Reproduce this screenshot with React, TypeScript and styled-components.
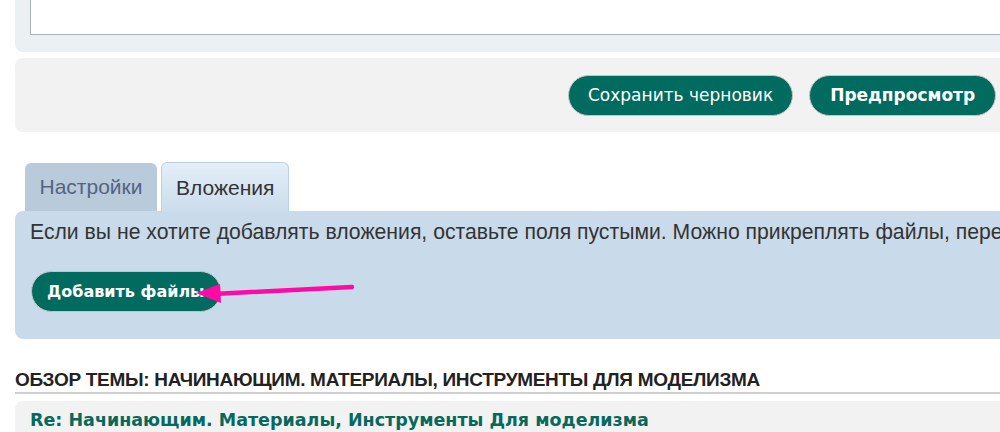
import React from "react";
import styled, { createGlobalStyle } from "styled-components";

const GlobalStyle = createGlobalStyle`
  html, body {
    margin: 0;
    padding: 0;
    background: #fff;
    overflow: hidden;
  }
  body {
    font-family: "Liberation Sans", Arial, sans-serif;
  }
`;

const Page = styled.div`
  width: 1120px;
  padding-left: 15px;
  margin-top: -14px;
  display: flex;
  flex-direction: column;
`;

const EditorPanel = styled.div`
  background: #ebf0f3;
  border-radius: 0 0 8px 8px;
  padding: 0 15px 17px 15px;
`;

const TextArea = styled.div`
  height: 48px;
  background: #fff;
  border: 1px solid #a9b4bd;
  border-top: none;
`;

const ActionBar = styled.div`
  margin-top: 6px;
  background: #f2f2f2;
  border-radius: 8px;
  height: 74px;
  display: flex;
  align-items: center;
  padding-left: 553px;
  gap: 16px;
`;

const PillButton = styled.button<{ $bold?: boolean; $size?: number; $pad?: number }>`
  height: 41px;
  padding: 0 ${(p) => p.$pad ?? 17}px;
  border-radius: 21px;
  border: 1px solid #c4c4c4;
  background: #026b5f;
  color: #fff;
  font-family: "DejaVu Sans", Verdana, sans-serif;
  font-size: ${(p) => p.$size ?? 17}px;
  font-weight: ${(p) => (p.$bold ? 700 : 400)};
  cursor: pointer;
  white-space: nowrap;
`;

const Tabs = styled.div`
  margin-top: 30px;
  display: flex;
  align-items: flex-end;
  gap: 4px;
  padding-left: 10px;
`;

const Tab = styled.div<{ $active?: boolean }>`
  height: ${(p) => (p.$active ? 50 : 48)}px;
  box-sizing: border-box;
  padding: 0 ${(p) => (p.$active ? 14 : 14.5)}px;
  display: flex;
  align-items: center;
  font-size: 21px;
  border-radius: 6px 6px 0 0;
  color: ${(p) => (p.$active ? "#333" : "#536482")};
  background: ${(p) =>
    p.$active ? "linear-gradient(#e4eef8, #cbdcec)" : "#b9cada"};
  border: ${(p) => (p.$active ? "1px solid #bcd0e3" : "none")};
  border-bottom: none;
  margin-bottom: ${(p) => (p.$active ? -1 : 0)}px;
  position: relative;
  z-index: 1;
`;

const TabPanel = styled.div`
  background: #c9daea;
  border-radius: 8px;
  height: 128px;
  padding: 9px 15px 0 15px;
  box-sizing: border-box;
  display: flex;
  flex-direction: column;
  gap: 27px;
  position: relative;
`;

const Hint = styled.p`
  margin: 0;
  font-size: 21.2px;
  line-height: 24px;
  color: #333;
  white-space: nowrap;
`;

const ButtonRow = styled.div`
  position: relative;
  padding-left: 1px;
`;

const Arrow = styled.svg`
  position: absolute;
  left: 160px;
  top: 4px;
  pointer-events: none;
`;

const ReviewHeading = styled.h3`
  margin: 30px 0 0 0;
  padding-bottom: 1px;
  border-bottom: 2px solid #cfcfcf;
  font-family: "Liberation Sans", Arial, sans-serif;
  font-size: 19px;
  line-height: 22px;
  font-weight: 700;
  color: #222;
  letter-spacing: -0.3px;
`;

const PostBox = styled.div`
  margin-top: 7px;
  background: #f2f2f2;
  border-radius: 8px 8px 0 0;
  height: 60px;
  padding: 9px 15px;
  box-sizing: border-box;
`;

const PostTitle = styled.a`
  font-family: "DejaVu Sans", Verdana, sans-serif;
  font-size: 17.5px;
  font-weight: 700;
  color: #07695d;
  text-decoration: none;
`;

export default function App() {
  return (
    <>
      <GlobalStyle />
      <Page>
        <EditorPanel>
          <TextArea />
        </EditorPanel>

        <ActionBar>
          <PillButton $pad={19}>Сохранить черновик</PillButton>
          <PillButton $bold $pad={20}>Предпросмотр</PillButton>
        </ActionBar>

        <Tabs>
          <Tab>Настройки</Tab>
          <Tab $active>Вложения</Tab>
        </Tabs>
        <TabPanel>
          <Hint>
            Если вы не хотите добавлять вложения, оставьте поля пустыми. Можно
            прикреплять файлы, перетаскивая их в окно сообщения.
          </Hint>
          <ButtonRow>
            <PillButton $bold $size={16} $pad={15}>Добавить файлы</PillButton>
            <Arrow width="170" height="32" viewBox="0 0 170 32">
              <line x1="162" y1="12" x2="24" y2="19" stroke="#ff0aa5" strokeWidth="4.5" strokeLinecap="round" />
              <polygon points="6,18 30,9 31,28" fill="#ff0aa5" />
            </Arrow>
          </ButtonRow>
        </TabPanel>

        <ReviewHeading>ОБЗОР ТЕМЫ: НАЧИНАЮЩИМ. МАТЕРИАЛЫ, ИНСТРУМЕНТЫ ДЛЯ МОДЕЛИЗМА</ReviewHeading>
        <PostBox>
          <PostTitle href="#">Re: Начинающим. Материалы, Инструменты Для моделизма</PostTitle>
        </PostBox>
      </Page>
    </>
  );
}
